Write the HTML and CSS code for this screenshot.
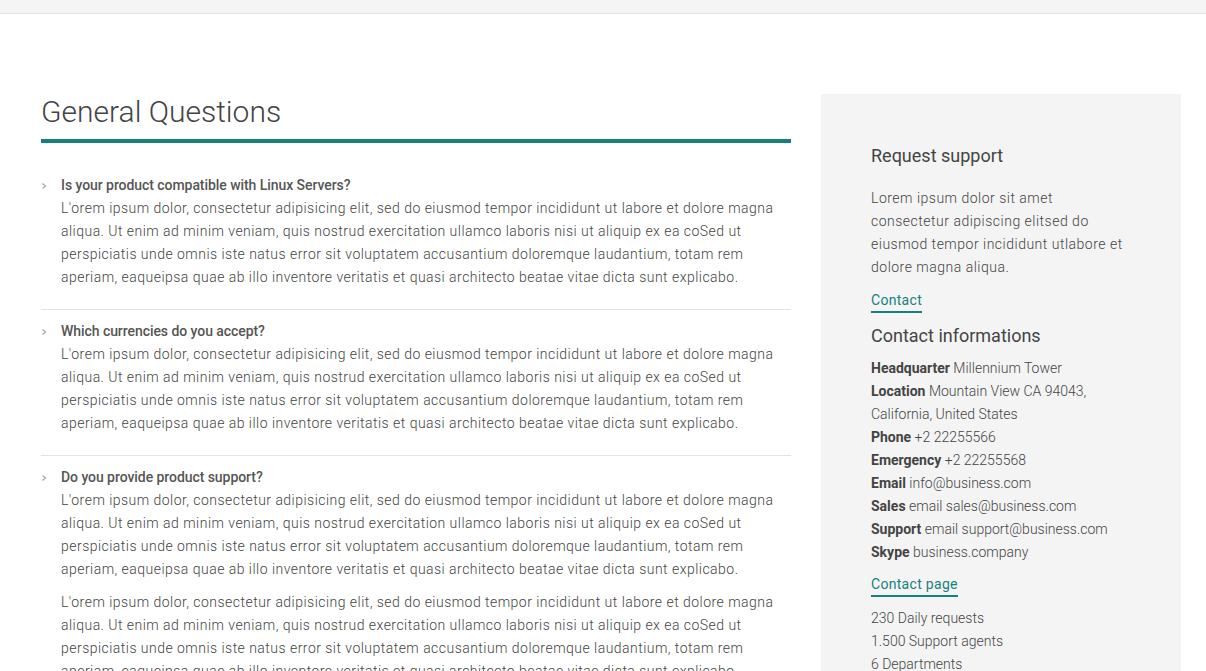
FILE: index.html
```html
<!DOCTYPE html>
<html lang="en">
<head>
<meta charset="utf-8">
<title>General Questions</title>
<link rel="stylesheet" href="styles.css">
</head>
<body>
<div class="topbar"></div>
<div class="page">
  <main class="faq">
    <h1 class="faq-title">General Questions</h1>
    <div class="faq-bar"></div>
    <div class="faq-item">
      <div class="faq-q"><svg class="chev" width="6" height="8" viewBox="0 0 6 8"><polyline points="1.5,1.5 4.5,4 1.5,6.5" fill="none" stroke="#aaa" stroke-width="1.3"/></svg><span>Is your product compatible with Linux Servers?</span></div>
      <p class="faq-a">L'orem ipsum dolor, consectetur adipisicing elit, sed do eiusmod tempor incididunt ut labore et dolore magna aliqua. Ut enim ad minim veniam, quis nostrud exercitation ullamco laboris nisi ut aliquip ex ea coSed ut perspiciatis unde omnis iste natus error sit voluptatem accusantium doloremque laudantium, totam rem aperiam, eaqueipsa quae ab illo inventore veritatis et quasi architecto beatae vitae dicta sunt explicabo.</p>
    </div>
    <div class="faq-item">
      <div class="faq-q"><svg class="chev" width="6" height="8" viewBox="0 0 6 8"><polyline points="1.5,1.5 4.5,4 1.5,6.5" fill="none" stroke="#aaa" stroke-width="1.3"/></svg><span>Which currencies do you accept?</span></div>
      <p class="faq-a">L'orem ipsum dolor, consectetur adipisicing elit, sed do eiusmod tempor incididunt ut labore et dolore magna aliqua. Ut enim ad minim veniam, quis nostrud exercitation ullamco laboris nisi ut aliquip ex ea coSed ut perspiciatis unde omnis iste natus error sit voluptatem accusantium doloremque laudantium, totam rem aperiam, eaqueipsa quae ab illo inventore veritatis et quasi architecto beatae vitae dicta sunt explicabo.</p>
    </div>
    <div class="faq-item">
      <div class="faq-q"><svg class="chev" width="6" height="8" viewBox="0 0 6 8"><polyline points="1.5,1.5 4.5,4 1.5,6.5" fill="none" stroke="#aaa" stroke-width="1.3"/></svg><span>Do you provide product support?</span></div>
      <p class="faq-a">L'orem ipsum dolor, consectetur adipisicing elit, sed do eiusmod tempor incididunt ut labore et dolore magna aliqua. Ut enim ad minim veniam, quis nostrud exercitation ullamco laboris nisi ut aliquip ex ea coSed ut perspiciatis unde omnis iste natus error sit voluptatem accusantium doloremque laudantium, totam rem aperiam, eaqueipsa quae ab illo inventore veritatis et quasi architecto beatae vitae dicta sunt explicabo.</p>
      <p class="faq-a">L'orem ipsum dolor, consectetur adipisicing elit, sed do eiusmod tempor incididunt ut labore et dolore magna aliqua. Ut enim ad minim veniam, quis nostrud exercitation ullamco laboris nisi ut aliquip ex ea coSed ut perspiciatis unde omnis iste natus error sit voluptatem accusantium doloremque laudantium, totam rem aperiam, eaqueipsa quae ab illo inventore veritatis et quasi architecto beatae vitae dicta sunt explicabo.</p>
    </div>
  </main>
  <aside class="side">
    <h3 class="side-title">Request support</h3>
    <p class="side-text">Lorem ipsum dolor sit amet consectetur adipiscing elitsed do eiusmod tempor incididunt utlabore et dolore magna aliqua.</p>
    <a class="side-link" href="#">Contact</a>
    <h3 class="side-title side-title-2">Contact informations</h3>
    <ul class="info">
      <li><b>Headquarter</b> Millennium Tower</li>
      <li><b>Location</b> Mountain View CA 94043, California, United States</li>
      <li><b>Phone</b> +2 22255566</li>
      <li><b>Emergency</b> +2 22255568</li>
      <li><b>Email</b> info@business.com</li>
      <li><b>Sales</b> email sales@business.com</li>
      <li><b>Support</b> email support@business.com</li>
      <li><b>Skype</b> business.company</li>
    </ul>
    <a class="side-link" href="#">Contact page</a>
    <ul class="stats">
      <li>230 Daily requests</li>
      <li>1.500 Support agents</li>
      <li>6 Departments</li>
    </ul>
  </aside>
</div>
</body>
</html>
```
FILE: styles.css
```css
* { box-sizing: border-box; }
html, body { margin: 0; padding: 0; }
body {
  font-family: Roboto, "Liberation Sans", Arial, sans-serif;
  color: #555;
  background: #fff;
  overflow: hidden;
}
.topbar {
  height: 14px;
  background: #f5f5f5;
  border-bottom: 1px solid #e3e3e3;
}
.page {
  display: flex;
  align-items: flex-start;
  gap: 30px;
  padding: 80px 0 0 41px;
}
.faq { width: 750px; flex: none; }
.faq-title {
  margin: 0;
  font-size: 30px;
  line-height: 36px;
  font-weight: 300;
  color: #444;
}
.faq-bar {
  height: 4px;
  background: #17807e;
  margin-top: 9px;
  margin-bottom: 21px;
}
.faq-item {
  padding: 10px 0 20px;
  border-bottom: 1px solid #e3e3e3;
}
.faq-q {
  display: flex;
  align-items: center;
  font-size: 14px;
  line-height: 23px;
  font-weight: 500;
  letter-spacing: -0.06px;
  color: #555;
}
.chev { width: 6px; margin: 0 14px 0 0; flex: none; }
.faq-a {
  margin: 0 0 10px 20px;
  font-size: 14px;
  line-height: 23px;
  font-weight: 300;
  letter-spacing: 0.47px;
  color: #444;
}
.faq-a:last-child { margin-bottom: 0; }
.side {
  width: 360px;
  flex: none;
  background: #f4f4f4;
  padding: 50px 50px 40px;
  font-size: 14px;
  line-height: 23px;
  font-weight: 300;
  color: #444;
  min-height: 620px;
}
.side-title {
  margin: 0;
  font-size: 18px;
  line-height: 24px;
  font-weight: 400;
  color: #444;
}
.side-text { margin: 19px 0 10px; letter-spacing: 0.5px; }
.side-link {
  display: inline-block;
  color: #17807e;
  text-decoration: none;
  border-bottom: 2px solid #17807e;
  line-height: 21px;
  font-weight: 400;
  letter-spacing: 0.3px;
}
.side-title-2 { margin-top: 11px; }
.info, .stats { list-style: none; margin: 9px 0 9px; padding: 0; }
.info b { font-weight: 700; color: #444; }
.stats { margin-top: 10px; }
```
